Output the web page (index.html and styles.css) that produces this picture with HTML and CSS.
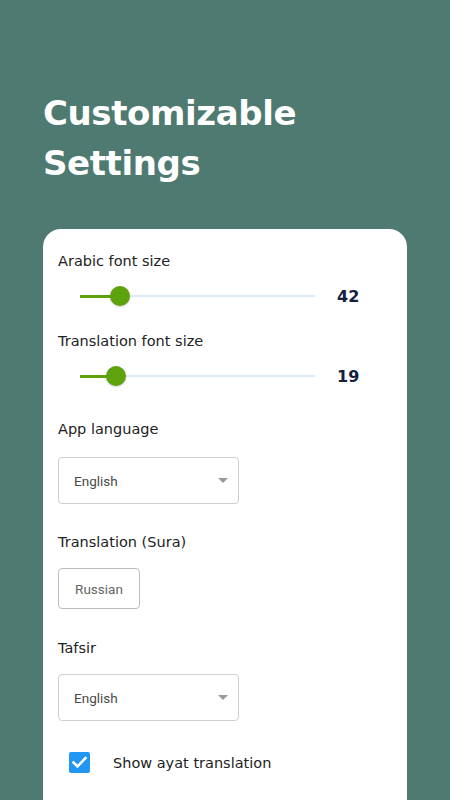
FILE: index.html
```html
<!DOCTYPE html>
<html>
<head>
<meta charset="utf-8">
<link rel="stylesheet" href="styles.css">
</head>
<body>
<div class="screen">
  <h1 class="title">Customizable<br>Settings</h1>
  <div class="card">
    <div class="label first">Arabic font size</div>
    <div class="slider-row">
      <div class="slider">
        <div class="fill" style="width:40px"></div>
        <div class="thumb" style="left:40px"></div>
      </div>
      <div class="value">42</div>
    </div>
    <div class="label second">Translation font size</div>
    <div class="slider-row">
      <div class="slider">
        <div class="fill" style="width:36px"></div>
        <div class="thumb" style="left:36px"></div>
      </div>
      <div class="value">19</div>
    </div>
    <div class="label sec">App language</div>
    <div class="select"><span>English</span><span class="arrow"></span></div>
    <div class="label sec2">Translation (Sura)</div>
    <div class="button">Russian</div>
    <div class="label sec3">Tafsir</div>
    <div class="select tafsir"><span>English</span><span class="arrow"></span></div>
    <div class="check-row">
      <span class="checkbox">
        <svg width="21" height="21" viewBox="0 0 21 21"><path d="M4.5 10.5l4 4 8-8.5" fill="none" stroke="#fff" stroke-width="2.6" stroke-linecap="square"/></svg>
      </span>
      <span class="check-label">Show ayat translation</span>
    </div>
  </div>
</div>
</body>
</html>
```
FILE: styles.css
```css
html, body { margin: 0; padding: 0; }
body { background: #4e7a72; width: 450px; height: 800px; overflow: hidden; font-family: "DejaVu Sans", sans-serif; }
.screen { padding: 88px 0 0 43px; }
.title {
  margin: 0;
  color: #fff;
  font-family: "DejaVu Sans", sans-serif;
  font-weight: 700;
  font-size: 34px;
  line-height: 50px;
  letter-spacing: -0.4px;
}
.card {
  margin-top: 41px;
  width: 364px;
  height: 600px;
  background: #fff;
  border-radius: 18px 18px 0 0;
  padding: 0 15px;
  box-sizing: border-box;
}
.label { font-size: 14.5px; color: #222; line-height: 20px; }
.label.first { padding-top: 22px; }
.label.second { padding-top: 20px; }
.label.sec { padding-top: 28px; }
.label.sec2 { padding-top: 28px; }
.label.sec3 { padding-top: 29px; }
.slider-row { display: flex; align-items: center; height: 30px; margin-top: 10px; }
.slider { position: relative; margin-left: 22px; width: 235px; height: 2px; background: #dcebf7; }
.fill { position: absolute; left: 0; top: -0.5px; height: 3px; background: #5ea30e; }
.thumb { position: absolute; top: 1px; width: 20px; height: 20px; margin: -10px 0 0 -10px; border-radius: 50%; background: #5ea30e; box-shadow: 0 1px 2px rgba(0,0,0,0.2); }
.value { margin-left: 22px; font-weight: 700; font-size: 16px; color: #13213d; }
.select {
  margin-top: 18px;
  width: 181px; height: 47px;
  box-sizing: border-box;
  border: 1px solid #cfcfcf;
  border-radius: 4px;
  display: flex; align-items: center; justify-content: space-between;
  padding: 0 10px 0 15px;
  font-family: Roboto, sans-serif; font-size: 13.5px; color: #4a4a4a;
}
.select.tafsir { margin-top: 16px; }
.arrow { width: 0; height: 0; border-left: 5px solid transparent; border-right: 5px solid transparent; border-top: 5px solid #999; }
.button {
  margin-top: 16px;
  width: 82px; height: 41px; box-sizing: border-box;
  border: 1px solid #bdbdbd; border-radius: 4px;
  display: flex; align-items: center; justify-content: center;
  font-family: Roboto, sans-serif; font-size: 13.5px; color: #666;
}
.check-row { display: flex; align-items: center; margin-top: 31px; padding-left: 11px; }
.checkbox { width: 21px; height: 21px; background: #2196f3; border-radius: 2px; display: block; }
.checkbox svg { display: block; }
.check-label { margin-left: 23px; font-size: 14.5px; color: #222; }
```
